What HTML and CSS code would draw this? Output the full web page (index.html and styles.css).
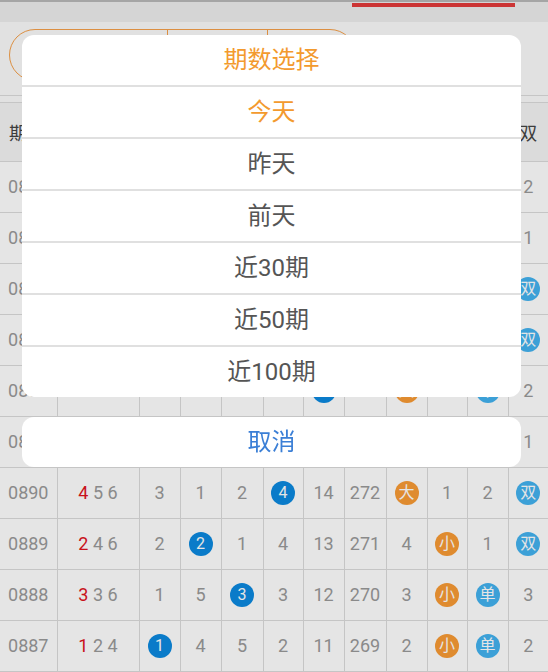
FILE: index.html
```html
<!DOCTYPE html>
<html lang="zh-CN">
<head>
	<meta charset="UTF-8">
	<link rel="stylesheet" href="styles.css">
	<title>走势图</title>
</head>
<body>
<div class="tabbar">
	<span class="indicator"></span>
</div>
<div class="filter">
	<div class="seg">
		<span class="seg-item on"></span>
		<span class="seg-item"></span>
		<span class="seg-item"></span>
	</div>
</div>
<table class="trend" cellspacing="0">
	<colgroup>
		<col style="width:57px"><col style="width:82px">
		<col style="width:41px"><col style="width:41px"><col style="width:42px">
		<col style="width:40px"><col style="width:41px"><col style="width:42px">
		<col style="width:41px"><col style="width:40px"><col style="width:41px"><col style="width:40px">
	</colgroup>
	<tr class="head">
		<th>期号</th><th>开奖号码</th>
		<th>1</th><th>2</th><th>3</th><th>4</th><th>5</th><th>6</th>
		<th>大</th><th>小</th><th>单</th><th>双</th>
	</tr>
	<tr>
		<td>0896</td><td><em>3</em> 5 7</td>
		<td>2</td><td>7</td><td><b class="ball">3</b></td><td>9</td><td>4</td><td>276</td>
		<td>1</td><td><b class="ball o">小</b></td><td><b class="ball s">单</b></td><td>2</td>
	</tr>
	<tr>
		<td>0895</td><td><em>1</em> 3 6</td>
		<td><b class="ball">1</b></td><td>6</td><td>1</td><td>8</td><td>3</td><td>275</td>
		<td>4</td><td><b class="ball o">小</b></td><td><b class="ball s">单</b></td><td>1</td>
	</tr>
	<tr>
		<td>0894</td><td><em>2</em> 4 5</td>
		<td>5</td><td><b class="ball">2</b></td><td>2</td><td>7</td><td>2</td><td>274</td>
		<td>3</td><td><b class="ball o">小</b></td><td>2</td><td><b class="ball s">双</b></td>
	</tr>
	<tr>
		<td>0893</td><td><em>4</em> 6 6</td>
		<td>4</td><td>3</td><td>1</td><td><b class="ball">4</b></td><td>1</td><td>273</td>
		<td><b class="ball o">大</b></td><td>2</td><td>1</td><td><b class="ball s">双</b></td>
	</tr>
	<tr>
		<td>0892</td><td><em>5</em> 5 6</td>
		<td>3</td><td>2</td><td>3</td><td>1</td><td><b class="ball">5</b></td><td>272</td>
		<td><b class="ball o">大</b></td><td>1</td><td><b class="ball s">单</b></td><td>2</td>
	</tr>
	<tr>
		<td>0891</td><td><em>3</em> 4 5</td>
		<td>2</td><td>1</td><td><b class="ball">3</b></td><td>1</td><td>15</td><td>271</td>
		<td>1</td><td><b class="ball o">小</b></td><td><b class="ball s">单</b></td><td>1</td>
	</tr>
	<tr>
		<td>0890</td><td><em>4</em> 5 6</td>
		<td>3</td><td>1</td><td>2</td><td><b class="ball">4</b></td><td>14</td><td>272</td>
		<td><b class="ball o">大</b></td><td>1</td><td>2</td><td><b class="ball s">双</b></td>
	</tr>
	<tr>
		<td>0889</td><td><em>2</em> 4 6</td>
		<td>2</td><td><b class="ball">2</b></td><td>1</td><td>4</td><td>13</td><td>271</td>
		<td>4</td><td><b class="ball o">小</b></td><td>1</td><td><b class="ball s">双</b></td>
	</tr>
	<tr>
		<td>0888</td><td><em>3</em> 3 6</td>
		<td>1</td><td>5</td><td><b class="ball">3</b></td><td>3</td><td>12</td><td>270</td>
		<td>3</td><td><b class="ball o">小</b></td><td><b class="ball s">单</b></td><td>3</td>
	</tr>
	<tr>
		<td>0887</td><td><em>1</em> 2 4</td>
		<td><b class="ball">1</b></td><td>4</td><td>5</td><td>2</td><td>11</td><td>269</td>
		<td>2</td><td><b class="ball o">小</b></td><td><b class="ball s">单</b></td><td>2</td>
	</tr>
</table>

<div class="mask"></div>
<div class="sheet">
	<ul class="sheet-list">
		<li class="sheet-title">期数选择</li>
		<li class="on">今天</li>
		<li>昨天</li>
		<li>前天</li>
		<li>近30期</li>
		<li>近50期</li>
		<li>近100期</li>
	</ul>
	<div class="sheet-cancel">取消</div>
</div>
</body>
</html>
```

FILE: styles.css
```css
body,div,ul,li,span,table,tr,td,th{
	margin: 0;
	padding: 0;
}
li{
	list-style: none;
}
body{
	background: #fbfbfb;
	font-family: Roboto, "Noto Sans CJK SC", sans-serif;
	overflow: hidden;
}
.tabbar{
	height: 20px;
	border-top: 2px solid #b8b8b8;
	background: #eeeeee;
}
.indicator{
	display: block;
	margin-left: 352px;
	width: 163px;
	height: 4px;
	margin-top: 1px;
	background: #e43c3c;
}
.filter{
	height: 74px;
	border-bottom: 1px solid #dcdcdc;
	padding: 7px 0 0 9px;
	box-sizing: border-box;
}
.seg{
	display: flex;
	width: 347px;
	height: 52px;
	border: 1.5px solid #f5a04a;
	border-radius: 26px;
	box-sizing: border-box;
	overflow: hidden;
}
.seg-item{
	border-left: 1.5px solid #f5a04a;
}
.seg-item:nth-child(1){
	width: 157px;
	border-left: 0;
}
.seg-item:nth-child(2){
	width: 99px;
}
.seg-item:nth-child(3){
	flex: 1;
}
.trend{
	margin-top: 6px;
	width: 548px;
	table-layout: fixed;
	border-collapse: collapse;
	background: #fff;
}
.trend th,.trend td{
	border: 1px solid #dcdcdc;
	text-align: center;
	padding: 0;
	white-space: nowrap;
}
.trend th{
	height: 58px;
	background: #f4f4f4;
	font-size: 18px;
	font-weight: normal;
	color: #444;
	text-align: left;
	padding-left: 9px;
}
.trend th:nth-child(n+2){
	text-align: center;
	padding-left: 0;
}
.trend tr th:first-child,.trend tr td:first-child{
	border-left: 0;
}
.trend tr th:last-child,.trend tr td:last-child{
	border-right: 0;
}
.trend td{
	height: 50px;
	font-size: 18px;
	color: #9a9a9a;
	line-height: 20px;
}
.trend td em{
	font-style: normal;
	color: #e0141e;
}
.ball{
	display: inline-block;
	width: 24px;
	height: 24px;
	line-height: 24px;
	border-radius: 50%;
	background: #0c8ae0;
	color: #fff;
	font-size: 16px;
	font-weight: normal;
	vertical-align: middle;
}
.ball.o{
	background: #f99b35;
}
.ball.s{
	background: #43b3f0;
}
.mask{
	position: fixed;
	left: 0;
	top: 0;
	right: 0;
	bottom: 0;
	background: rgba(0,0,0,.1);
}
.sheet{
	position: fixed;
	left: 22px;
	top: 35px;
	width: 499px;
}
.sheet-list{
	background: #fff;
	border-radius: 12px;
	overflow: hidden;
}
.sheet-list li,.sheet-cancel{
	height: 50px;
	line-height: 50px;
	text-align: center;
	font-size: 24px;
	color: #555;
}
.sheet-list li{
	border-bottom: 2px solid #e0e0e0;
}
.sheet-list li:last-child{
	border-bottom: 0;
}
.sheet-list .sheet-title,.sheet-list .on{
	color: #f39a2e;
}
.sheet-cancel{
	margin-top: 20px;
	background: #fff;
	border-radius: 12px;
	color: #3b7fd6;
}
```
